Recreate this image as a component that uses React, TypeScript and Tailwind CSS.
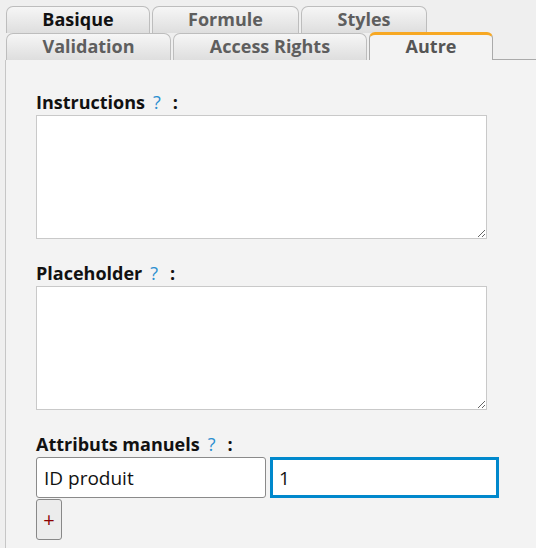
import React from 'react'

const font = { fontFamily: '"Open Sans", "Noto Sans", sans-serif' }

const Tab: React.FC<{ label: string; width: string; active?: boolean; dark?: boolean }> = ({ label, width, active, dark }) => {
  if (active) {
    return (
      <div className={`${width} h-[28px] shrink-0 rounded-t-[6px] border-x border-[#aaa] border-t-[3px] border-t-[#f7a823] bg-[#f3f3f3] flex items-center justify-center pb-[2px] text-[18px] font-bold text-[#555]`}>
        {label}
      </div>
    )
  }
  return (
    <div
      className={`${width} h-[27px] shrink-0 rounded-t-[7px] border border-b-0 border-[#bdbdbd] bg-gradient-to-b from-[#f6f6f6] to-[#dedede] flex items-center justify-center pb-[2px] text-[18px] font-bold ${dark ? 'text-[#111]' : 'text-[#5e5e5e]'}`}
    >
      {label}
    </div>
  )
}

const Label: React.FC<{ text: string }> = ({ text }) => (
  <div className="text-[18px] font-bold text-[#111] leading-[22px] h-[22px] flex items-center">
    <span>{text}</span>
    <span className="ml-[8px] text-[#2b8fd0] font-normal">?</span>
    <span className="ml-[12px]">:</span>
  </div>
)

const Area: React.FC = () => (
  <textarea className="block w-[451px] h-[124px] bg-white border border-[#c9c9c9] outline-none resize-y" />
)

export default function App() {
  return (
    <div className="w-[536px] h-[548px] bg-[#efefef] overflow-hidden flex flex-col pt-[6px]" style={font}>
      <div className="flex pl-[6px] gap-[2px] h-[27px]">
        <Tab label="Basique" width="w-[144px]" dark />
        <Tab label="Formule" width="w-[147px]" />
        <Tab label="Styles" width="w-[126px]" />
      </div>
      <div className="flex pl-[6px] h-[27px] items-end">
        <Tab label="Validation" width="w-[165px]" />
        <div className="w-[2px]" />
        <Tab label="Access Rights" width="w-[194px]" />
        <div className="w-[2px]" />
        <Tab label="Autre" width="w-[124px]" active />
        <div className="flex-1 self-stretch border-b border-[#aaa]" />
      </div>
      <div className="flex-1 ml-[5px] border-l border-[#c6c6c6] bg-[#f3f3f3] pl-[30px] pt-[31px]">
        <Label text="Instructions" />
        <div className="mt-[2px]">
          <Area />
        </div>
        <div className="mt-[23px]">
          <Label text="Placeholder" />
        </div>
        <div className="mt-[2px]">
          <Area />
        </div>
        <div className="mt-[23px]">
          <Label text="Attributs manuels" />
        </div>
        <div className="flex gap-[4px] mt-[2px]">
          <input
            defaultValue="ID produit"
            className="w-[230px] h-[41px] bg-white border border-[#8a8a8a] rounded-[3px] px-[7px] text-[19px] text-[#111] outline-none"
          />
          <input
            defaultValue="1"
            className="w-[229px] h-[41px] bg-white border-[3px] border-[#0088cc] px-[6px] text-[19px] text-[#111] outline-none"
          />
        </div>
        <button className="mt-[1px] w-[26px] h-[41px] rounded-[3px] border border-[#888] bg-[#ececec] text-[#8b0000] text-[20px] flex items-center justify-center">
          +
        </button>
      </div>
    </div>
  )
}
